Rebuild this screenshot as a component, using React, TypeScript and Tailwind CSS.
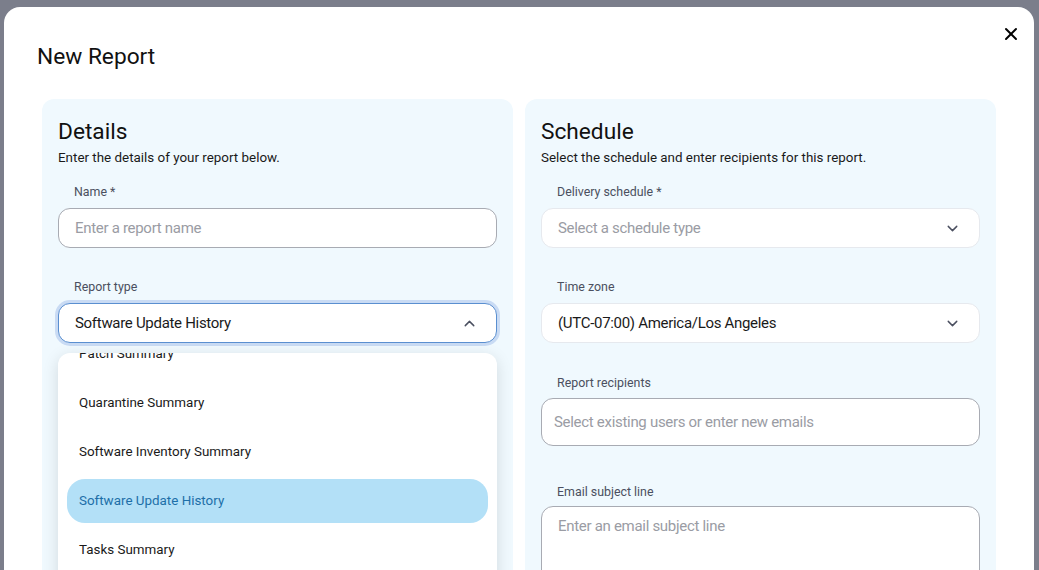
import { ChevronDown, ChevronUp, X } from "lucide-react";

const reportTypes = [
  "Patch Summary",
  "Quarantine Summary",
  "Software Inventory Summary",
  "Software Update History",
  "Tasks Summary",
];

const Label = ({ children, className = "" }: { children: React.ReactNode; className?: string }) => (
  <div className={`pl-4 text-[12.4px] leading-[18px] text-[#4b5060] ${className}`}>{children}</div>
);

export default function App() {
  const selected = "Software Update History";

  return (
    <div
      className="h-[570px] overflow-hidden bg-[#7b7e8b] pt-[7px] pl-[4px] pr-[5px]"
      style={{ fontFamily: "Roboto, 'Noto Sans', sans-serif" }}
    >
      <div className="relative h-[600px] rounded-t-2xl bg-white px-[38px] pt-[34px]">
        <button className="absolute right-[9px] top-[13px] p-1 text-black">
          <X size={20} strokeWidth={2.4} />
        </button>

        <h1 className="-ml-[5px] text-[22.7px] leading-[32px] text-[#111]">New Report</h1>

        <div className="mt-[26px] grid grid-cols-2 gap-3">
          {/* Details */}
          <section className="h-[500px] rounded-xl bg-[#f0f9fe] px-4 pt-[17px]">
            <h2 className="text-[22.7px] leading-[32px] text-[#111]">Details</h2>
            <p className="text-[13.4px] leading-[20px] text-[#1a1a1a]">Enter the details of your report below.</p>

            <Label className="mt-[15px]">Name *</Label>
            <div className="mt-[7px] flex h-10 items-center rounded-xl border border-[#a8abb3] bg-white px-4 text-[15px] tracking-[-0.02em] text-[#9a9ca4]">
              Enter a report name
            </div>

            <Label className="mt-[30px]">Report type</Label>
            <div className="relative mt-[7px]">
              <div className="flex h-10 items-center justify-between rounded-xl border border-[#5a8fd0] bg-white px-4 text-[15px] tracking-[-0.02em] text-[#1a1a1a] ring-[3px] ring-[#c9dbf4]">
                <span>{selected}</span>
                <ChevronUp size={17} strokeWidth={2} className="mr-[2px] text-[#4b5060]" />
              </div>

              <div className="absolute left-0 right-0 top-[50px] z-10 h-[240px] overflow-hidden rounded-xl bg-white shadow-[0_4px_16px_rgba(0,0,0,0.13)]">
                <div className="-mt-[21px] flex flex-col gap-[5px] px-[9px]">
                  {reportTypes.map((t) => (
                    <div
                      key={t}
                      className={`flex h-[44px] items-center rounded-[18px] px-3 text-[13.4px] ${
                        t === selected ? "bg-[#b3e0f7] text-[#1d6fa8]" : "text-[#1a1a1a]"
                      }`}
                    >
                      {t}
                    </div>
                  ))}
                </div>
              </div>
            </div>
          </section>

          {/* Schedule */}
          <section className="h-[500px] rounded-xl bg-[#f0f9fe] px-4 pt-[17px]">
            <h2 className="text-[22.7px] leading-[32px] text-[#111]">Schedule</h2>
            <p className="text-[13.4px] leading-[20px] text-[#1a1a1a]">
              Select the schedule and enter recipients for this report.
            </p>

            <Label className="mt-[15px]">Delivery schedule *</Label>
            <div className="mt-[7px] flex h-10 items-center justify-between rounded-xl border border-[#e6e9ee] bg-white px-4 text-[15px] tracking-[-0.02em] text-[#9a9ca4]">
              <span>Select a schedule type</span>
              <ChevronDown size={17} strokeWidth={2} className="mr-[2px] text-[#4b5060]" />
            </div>

            <Label className="mt-[30px]">Time zone</Label>
            <div className="mt-[7px] flex h-10 items-center justify-between rounded-xl border border-[#e6e9ee] bg-white px-4 text-[15px] tracking-[-0.02em] text-[#1a1a1a]">
              <span>(UTC-07:00) America/Los Angeles</span>
              <ChevronDown size={17} strokeWidth={2} className="mr-[2px] text-[#4b5060]" />
            </div>

            <Label className="mt-[31px]">Report recipients</Label>
            <div className="mt-[6px] flex h-12 items-center rounded-xl border border-[#a8abb3] bg-white px-3 text-[15px] tracking-[-0.02em] text-[#9a9ca4]">
              Select existing users or enter new emails
            </div>

            <Label className="mt-[37px]">Email subject line</Label>
            <div className="mt-[5px] h-[100px] rounded-xl border border-[#a8abb3] bg-white px-4 pt-[9px] text-[15px] leading-[20px] tracking-[-0.02em] text-[#9a9ca4]">
              Enter an email subject line
            </div>
          </section>
        </div>
      </div>
    </div>
  );
}
